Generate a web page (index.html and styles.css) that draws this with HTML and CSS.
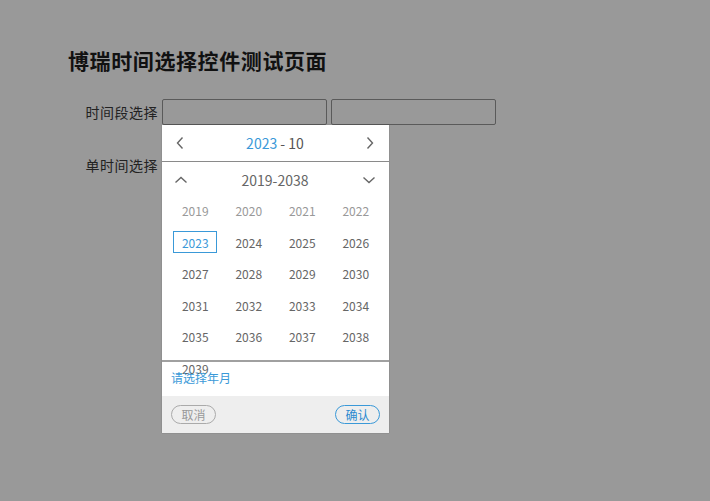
FILE: index.html
```html
<!DOCTYPE html>
<html lang="zh">
<head>
<meta charset="utf-8">
<title>博瑞时间选择控件测试页面</title>
<link rel="stylesheet" href="styles.css">
</head>
<body>
<div class="page">
  <h1 class="title">博瑞时间选择控件测试页面</h1>
  <div class="row row-range">
    <label class="label">时间段选择</label>
    <div class="inputs">
      <span class="input"></span>
      <span class="input"></span>
    </div>
  </div>
  <div class="row row-single">
    <label class="label">单时间选择</label>
  </div>

  <div class="picker">
    <div class="picker-head">
      <span class="nav">
        <svg width="10" height="14" viewBox="0 0 10 14"><path d="M7.5 1.5 L2.5 7 L7.5 12.5" fill="none" stroke="#666" stroke-width="1.4"/></svg>
      </span>
      <span class="head-title"><span class="blue">2023</span> - 10</span>
      <span class="nav">
        <svg width="10" height="14" viewBox="0 0 10 14"><path d="M2.5 1.5 L7.5 7 L2.5 12.5" fill="none" stroke="#666" stroke-width="1.4"/></svg>
      </span>
    </div>
    <div class="range-row">
      <span class="nav">
        <svg width="14" height="10" viewBox="0 0 14 10"><path d="M1.5 7.5 L7 2.5 L12.5 7.5" fill="none" stroke="#666" stroke-width="1.4"/></svg>
      </span>
      <span class="range-title">2019-2038</span>
      <span class="nav">
        <svg width="14" height="10" viewBox="0 0 14 10"><path d="M1.5 2.5 L7 7.5 L12.5 2.5" fill="none" stroke="#666" stroke-width="1.4"/></svg>
      </span>
    </div>
    <div class="years">
      <span class="year muted">2019</span>
      <span class="year muted">2020</span>
      <span class="year muted">2021</span>
      <span class="year muted">2022</span>
      <span class="year"><span class="sel">2023</span></span>
      <span class="year">2024</span>
      <span class="year">2025</span>
      <span class="year">2026</span>
      <span class="year">2027</span>
      <span class="year">2028</span>
      <span class="year">2029</span>
      <span class="year">2030</span>
      <span class="year">2031</span>
      <span class="year">2032</span>
      <span class="year">2033</span>
      <span class="year">2034</span>
      <span class="year">2035</span>
      <span class="year">2036</span>
      <span class="year">2037</span>
      <span class="year">2038</span>
      <span class="year">2039</span>
    </div>
    <div class="info">请选择年月</div>
    <div class="footer">
      <button class="btn btn-cancel">取消</button>
      <button class="btn btn-ok">确认</button>
    </div>
  </div>
</div>
</body>
</html>
```

FILE: styles.css
```css
html, body {
  margin: 0;
  padding: 0;
  background: #999999;
  font-family: "Noto Sans CJK SC", "Noto Sans", "Liberation Sans", sans-serif;
}
.page {
  position: relative;
  width: 710px;
  height: 501px;
  padding: 44px 0 0 68px;
  box-sizing: border-box;
}
.title {
  margin: 0;
  font-size: 21px;
  line-height: 32px;
  font-weight: bold;
  color: #111;
  letter-spacing: 0.6px;
}
.row {
  display: flex;
  align-items: center;
}
.row-range {
  margin-top: 23px;
  height: 26px;
}
.row-single {
  margin-top: 27px;
  height: 26px;
}
.label {
  width: 94px;
  text-align: right;
  font-size: 14px;
  letter-spacing: 0.5px;
  color: #222;
  padding-right: 4px;
  box-sizing: border-box;
}
.inputs {
  display: flex;
  gap: 4px;
}
.input {
  display: block;
  width: 165px;
  height: 26px;
  box-sizing: border-box;
  border: 1px solid #5a5a5a;
  border-radius: 2px;
  background: #999999;
}
.picker {
  position: absolute;
  left: 162px;
  top: 125px;
  width: 227px;
  background: #fff;
  box-shadow: 0 0 1px rgba(0,0,0,0.35);
}
.picker-head {
  display: flex;
  align-items: center;
  justify-content: space-between;
  height: 36px;
  padding: 0 12px 0 11px;
  border-bottom: 1px solid #8a8a8a;
}
.nav {
  display: flex;
  align-items: center;
  justify-content: center;
  width: 14px;
  height: 14px;
}
.head-title {
  font-size: 14px;
  color: #555;
}
.blue {
  color: #3a99d8;
}
.range-row {
  display: flex;
  align-items: center;
  justify-content: space-between;
  height: 33px;
  padding: 2px 13px 0 12px;
  box-sizing: border-box;
}
.range-title {
  font-size: 14px;
  color: #666;
}
.years {
  display: grid;
  grid-template-columns: repeat(4, 53.5px);
  grid-auto-rows: 31.5px;
  padding: 0 6.5px;
  height: 165px;
  overflow: visible;
  border-bottom: 2px solid #a0a0a0;
}
.year {
  display: flex;
  align-items: center;
  justify-content: center;
  font-size: 12px;
  color: #666;
}
.year.muted {
  color: #999;
}
.sel {
  display: flex;
  align-items: center;
  justify-content: center;
  width: 44px;
  height: 22px;
  box-sizing: border-box;
  border: 1px solid #3a99d8;
  color: #3a99d8;
}
.info {
  height: 34px;
  padding: 0 0 0 9px;
  box-sizing: border-box;
  line-height: 32px;
  font-size: 12px;
  color: #3a99d8;
  position: relative;
}
.footer {
  display: flex;
  align-items: center;
  justify-content: space-between;
  height: 37px;
  padding: 0 9px;
  background: #eeeeee;
}
.btn {
  width: 45px;
  height: 19px;
  padding: 0;
  border-radius: 10px;
  background: transparent;
  font-family: inherit;
  font-size: 12px;
  line-height: 17px;
}
.btn-cancel {
  border: 1px solid #aaa;
  color: #999;
}
.btn-ok {
  border: 1px solid #3a99d8;
  color: #2a8ad0;
}
```
